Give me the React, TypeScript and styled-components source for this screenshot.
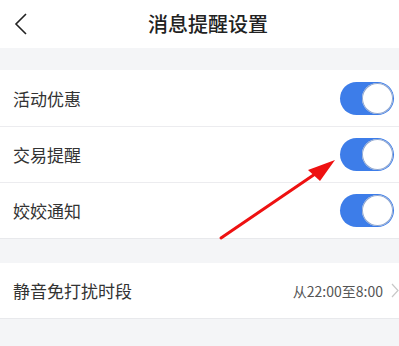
import React from "react";
import styled, { createGlobalStyle } from "styled-components";

const GlobalStyle = createGlobalStyle`
  html, body { margin: 0; padding: 0; background: #f4f5f7; }
  body { font-family: "Noto Sans CJK SC", "Noto Sans", sans-serif; }
  * { box-sizing: border-box; }
`;

const Page = styled.div`
  position: relative;
  width: 399px;
  min-height: 346px;
  background: #f4f5f7;
  overflow: hidden;
`;

const Header = styled.header`
  height: 48px;
  background: #fff;
  display: grid;
  grid-template-columns: 48px 1fr 48px;
  align-items: center;
`;

const BackButton = styled.div`
  display: flex;
  align-items: center;
  padding-left: 14px;
  height: 100%;
`;

const Title = styled.h1`
  margin: 0 0 2px;
  padding-left: 17px;
  text-align: center;
  font-size: 20px;
  font-weight: 500;
  color: #222;
`;

const Group = styled.section<{ $top: number }>`
  margin-top: ${(p) => p.$top}px;
  background: #fff;
  border-bottom: 1px solid #e8e9ec;
`;

const Row = styled.div<{ $h: number }>`
  height: ${(p) => p.$h}px;
  display: flex;
  align-items: center;
  justify-content: space-between;
  padding: 0 5px 0 13px;
  & + & {
    border-top: 1px solid #ececef;
  }
`;

const Label = styled.span`
  font-size: 17px;
  color: #333;
`;

const Toggle = styled.div<{ $on: boolean }>`
  width: 54px;
  height: 33px;
  border-radius: 17px;
  background: ${(p) => (p.$on ? "#3d7de9" : "#ddd")};
  display: flex;
  align-items: center;
  justify-content: ${(p) => (p.$on ? "flex-end" : "flex-start")};
  padding: 1px;
`;

const Knob = styled.div`
  width: 31px;
  height: 31px;
  border-radius: 50%;
  background: #fff;
  box-shadow: inset 0 0 0 1px #8fa6cf;
`;

const Value = styled.div`
  display: flex;
  align-items: center;
  gap: 8px;
  font-size: 14px;
  color: #555;
  margin-right: -5px;
`;

const Arrow = styled.svg`
  position: absolute;
  left: 0;
  top: 0;
  pointer-events: none;
`;

const items = ["活动优惠", "交易提醒", "姣姣通知"];

export default function App() {
  return (
    <>
      <GlobalStyle />
      <Page>
        <Header>
          <BackButton>
            <svg width="14" height="22" viewBox="0 0 14 22">
              <path d="M12 1 L2 11 L12 21" fill="none" stroke="#222" strokeWidth="1.6" />
            </svg>
          </BackButton>
          <Title>消息提醒设置</Title>
          <div />
        </Header>
        <Group $top={22}>
          {items.map((t) => (
            <Row key={t} $h={56}>
              <Label>{t}</Label>
              <Toggle $on>
                <Knob />
              </Toggle>
            </Row>
          ))}
        </Group>
        <Group $top={24}>
          <Row $h={55}>
            <Label>静音免打扰时段</Label>
            <Value>
              从22:00至8:00
              <svg width="8" height="15" viewBox="0 0 8 15">
                <path d="M1 1 L7 7.5 L1 14" fill="none" stroke="#c8c8c8" strokeWidth="1.2" />
              </svg>
            </Value>
          </Row>
        </Group>
        <Arrow width="399" height="346" viewBox="0 0 399 346">
          <line x1="221" y1="238" x2="318" y2="172" stroke="#ee1111" strokeWidth="3" strokeLinecap="round" />
          <polygon points="335,160 308,170 320,181" fill="#ee1111" />
        </Arrow>
      </Page>
    </>
  );
}
